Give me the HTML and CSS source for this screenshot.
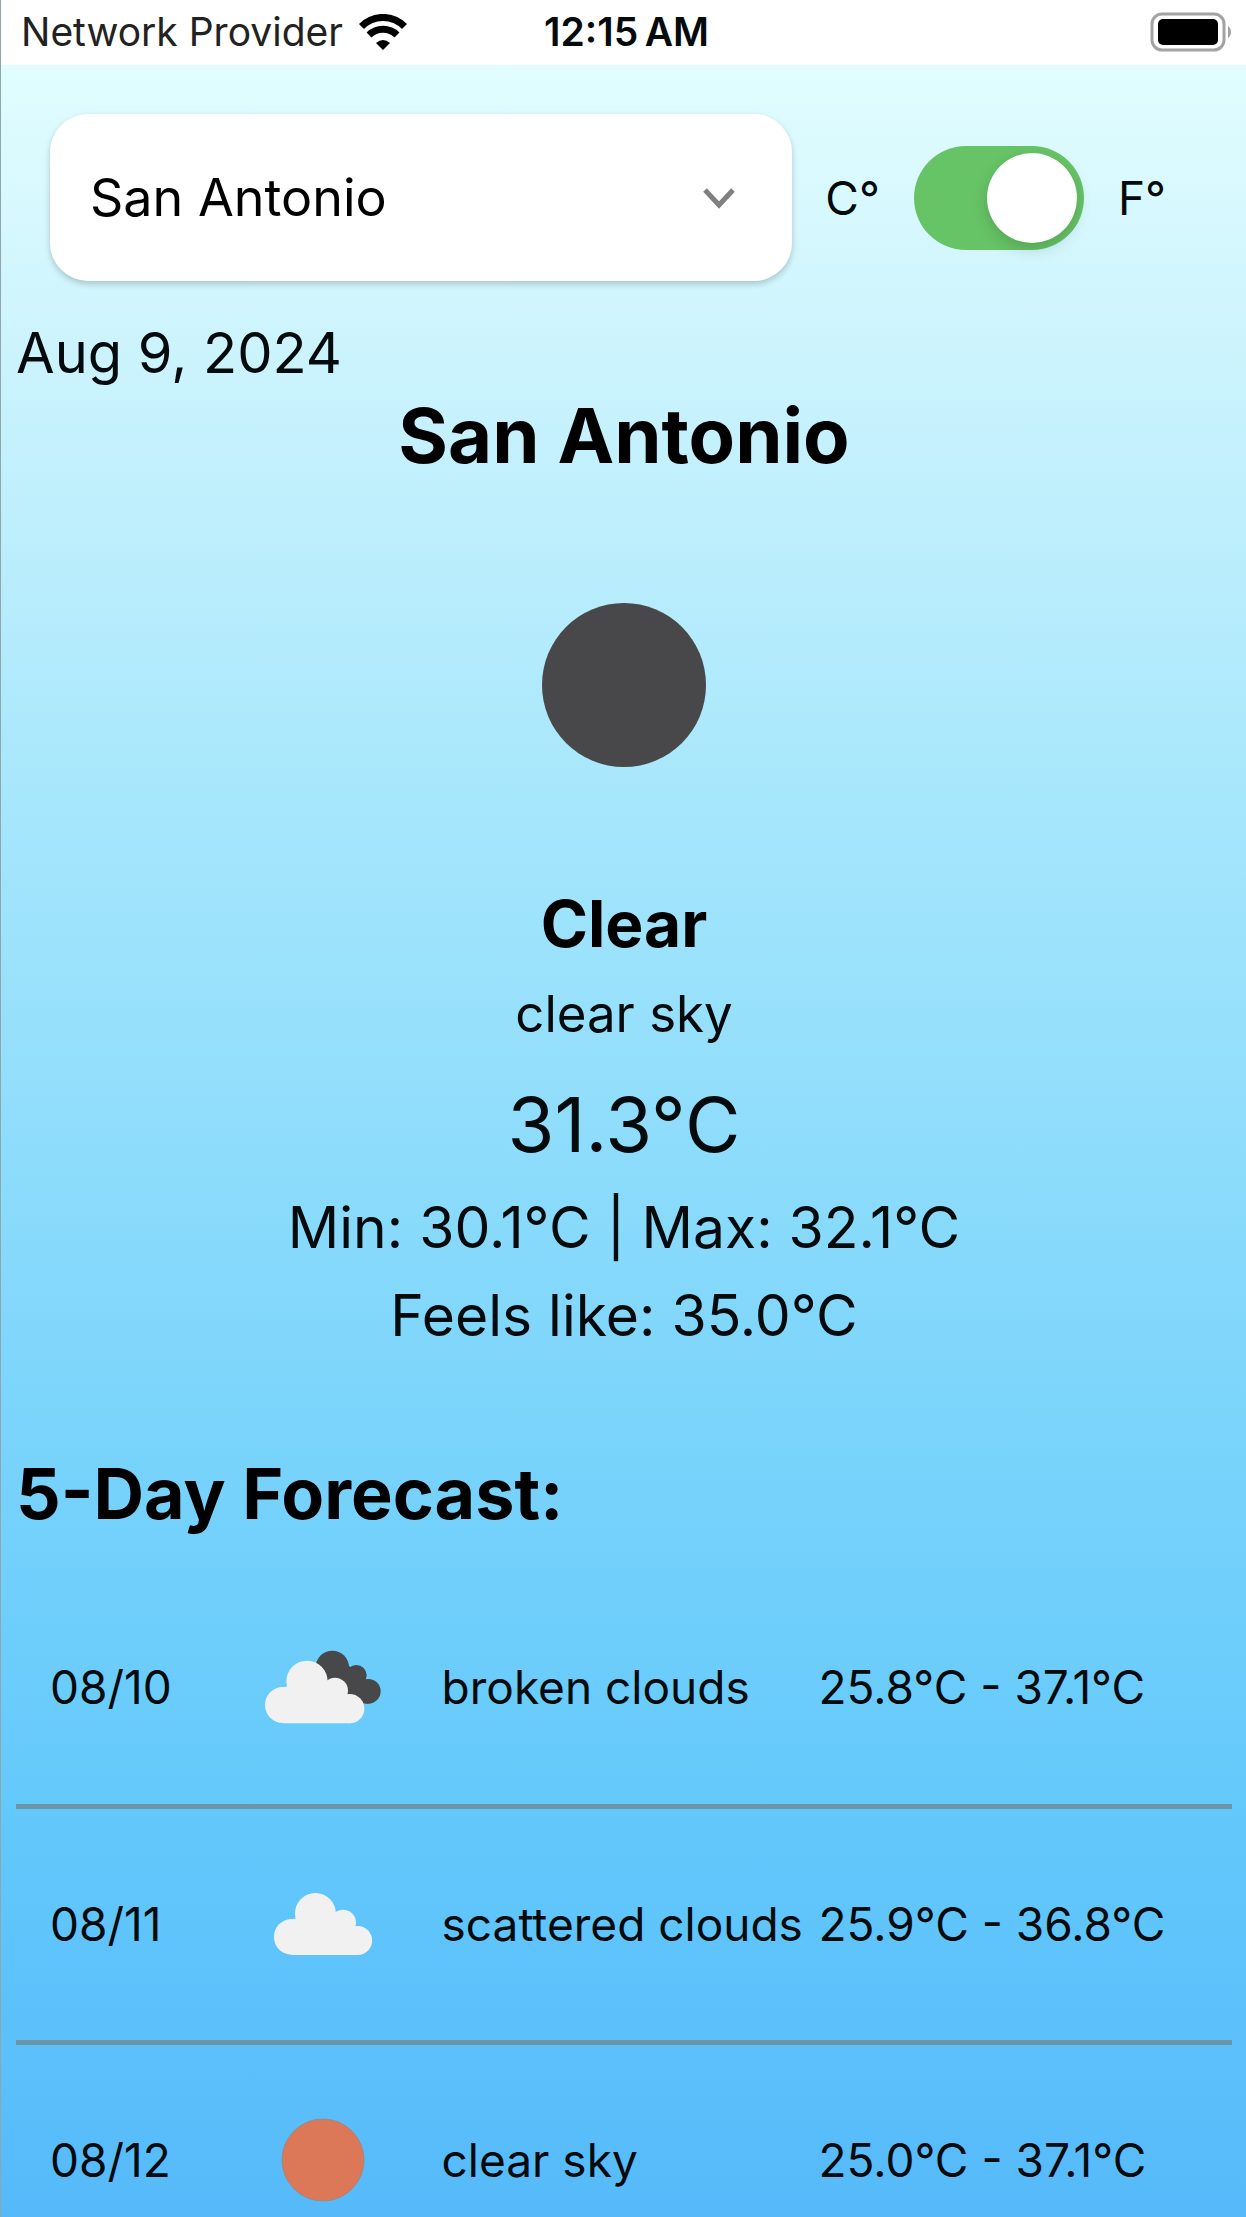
FILE: index.html
```html
<!DOCTYPE html>
<html lang="en">
<head>
  <meta charset="utf-8">
  <meta name="viewport" content="width=device-width, initial-scale=1">
  <title>Weather</title>
  <link rel="stylesheet" href="styles.css">
</head>
<body class="app">
  <header class="status-bar">
    <div class="carrier">
      <span>Network Provider</span>
      <svg class="wifi" viewBox="0 0 48 36" aria-hidden="true">
        <path d="M2.500 12.500A30 30 0 0 1 45.500 12.500" fill="none" stroke="#000" stroke-width="7"/>
        <path d="M10 21A20 20 0 0 1 38 21" fill="none" stroke="#000" stroke-width="7"/>
        <path d="M17 29Q24 23 31 29L24 36Z"/>
      </svg>
    </div>
    <span class="clock">12:15&#8201;AM</span>
    <svg class="battery" viewBox="0 0 82 40" aria-label="Battery full">
      <rect x="2" y="2" width="72" height="36" rx="10" fill="none" stroke="#a3a3a3" stroke-width="3"/>
      <rect x="8" y="7" width="60" height="26" rx="5"/>
      <path d="M78 14Q81 16 81 20T78 26Z" fill="#a3a3a3"/>
    </svg>
  </header>

  <main class="weather">
    <div class="controls">
      <div class="city-picker">
        <select class="city-select" aria-label="City">
          <option>San Antonio</option>
        </select>
        <svg class="chevron" viewBox="0 0 34 22" aria-hidden="true">
          <path d="M3 3L17 18L31 3" fill="none" stroke="#808080" stroke-width="5"/>
        </svg>
      </div>
      <div class="unit-switch">
        <label for="unit">C°</label>
        <input class="toggle" type="checkbox" role="switch" id="unit" checked>
        <label for="unit">F°</label>
      </div>
    </div>

    <section class="current">
      <p class="date">Aug 9, 2024</p>
      <h1 class="city">San Antonio</h1>
      <svg class="current-icon" viewBox="0 0 164 164" aria-hidden="true">
        <circle cx="82" cy="82" r="82" fill="#48484a"/>
      </svg>
      <h2 class="condition">Clear</h2>
      <p class="description">clear sky</p>
      <p class="temperature">31.3°C</p>
      <p class="detail">Min: 30.1°C | Max: 32.1°C</p>
      <p class="detail">Feels like: 35.0°C</p>
    </section>

    <section class="forecast">
      <h2 class="forecast-title">5-Day Forecast:</h2>
      <table class="forecast-table">
        <colgroup>
          <col class="col-date"><col class="col-icon"><col class="col-sky"><col class="col-range">
        </colgroup>
        <tbody>
          <tr>
            <td>08/10</td>
            <td class="icon-cell">
              <svg class="icon-clouds" viewBox="78 66 348 222" aria-hidden="true">
                <g fill="#48484a">
                  <circle cx="280" cy="118" r="50"/>
                  <circle cx="352" cy="142" r="31"/>
                  <circle cx="388" cy="190" r="37"/>
                  <path d="M230 118L325 110L380 150L388 227L300 220Z"/>
                </g>
                <g fill="#f1f1f1">
                  <circle cx="132" cy="231" r="54"/>
                  <circle cx="204" cy="160" r="62"/>
                  <circle cx="288" cy="188" r="39"/>
                  <circle cx="332" cy="242" r="44"/>
                  <path d="M132 180L204 150L288 180L332 240V286H132Z"/>
                </g>
              </svg>
            </td>
            <td>broken clouds</td>
            <td>25.8°C - 37.1°C</td>
          </tr>
          <tr>
            <td>08/11</td>
            <td class="icon-cell">
              <svg class="icon-cloud" viewBox="78 98 298 188" aria-hidden="true">
                <g fill="#f1f1f1">
                  <circle cx="132" cy="231" r="54"/>
                  <circle cx="204" cy="160" r="62"/>
                  <circle cx="288" cy="188" r="39"/>
                  <circle cx="332" cy="242" r="44"/>
                  <path d="M132 180L204 150L288 180L332 240V286H132Z"/>
                </g>
              </svg>
            </td>
            <td>scattered clouds</td>
            <td>25.9°C - 36.8°C</td>
          </tr>
          <tr>
            <td>08/12</td>
            <td class="icon-cell">
              <svg class="icon-sun" viewBox="0 0 84 84" aria-hidden="true">
                <circle cx="42" cy="42" r="41" fill="#dc7757" stroke="#9a8a83" stroke-width="1"/>
              </svg>
            </td>
            <td>clear sky</td>
            <td>25.0°C - 37.1°C</td>
          </tr>
        </tbody>
      </table>
    </section>
  </main>
</body>
</html>
```
FILE: styles.css
```css
* {
  box-sizing: border-box;
}

.app {
  margin: 0;
  height: 100vh;
  display: flex;
  flex-direction: column;
  overflow: hidden;
  border-left: 1px solid #8fa6ab;
  background: #fff;
  color: #050a0c;
  font-family: Inter, "Liberation Sans", sans-serif;
}

h1, h2, p {
  margin: 0;
}

h1, h2 {
  color: #000;
}

/* Status bar */
.status-bar {
  flex: none;
  display: grid;
  grid-template-columns: 1fr auto 1fr;
  align-items: center;
  height: 65px;
  padding: 0 14px 2px 20px;
  font-size: 39px;
  line-height: 44px;
}

.carrier {
  display: flex;
  align-items: center;
  gap: 16px;
  color: #222;
  white-space: nowrap;
}

.wifi {
  width: 48px;
  height: 36px;
}

.clock {
  font-weight: 600;
}

.battery {
  justify-self: end;
  width: 82px;
  height: 40px;
}

/* Screen */
.weather {
  flex: 1;
  min-height: 0;
  overflow: hidden;
  padding: 49px 14px 0 15px;
  background: linear-gradient(#e1fdff 0%, #d0f5fd 11%, #a5e6fc 35%, #7cd5fb 62%, #62c8fb 82%, #56bafa 100%);
}

.controls {
  display: flex;
  align-items: center;
  justify-content: space-between;
  padding: 0 66px 0 34px;
}

.city-picker {
  position: relative;
  flex: 0 1 742px;
}

.city-select {
  appearance: none;
  display: block;
  width: 100%;
  height: 167px;
  padding: 0 96px 0 40px;
  border: 0;
  border-radius: 38px;
  background: #fff;
  box-shadow: 0 3px 6px rgba(0, 0, 0, 0.2);
  color: #000;
  font: inherit;
  font-size: 52px;
}

.chevron {
  position: absolute;
  top: 73px;
  right: 56px;
  width: 34px;
  height: 22px;
  pointer-events: none;
}

.unit-switch {
  display: flex;
  align-items: center;
  gap: 34px;
  font-size: 46px;
  line-height: 56px;
}

.toggle {
  appearance: none;
  display: flex;
  justify-content: flex-end;
  width: 170px;
  height: 104px;
  margin: 0;
  padding: 7px;
  border-radius: 52px;
  background: #67c466;
}

.toggle::before {
  content: "";
  width: 90px;
  height: 90px;
  border-radius: 50%;
  background: #fff;
  box-shadow: 0 6px 16px rgba(0, 0, 0, 0.16);
}

.toggle:not(:checked) {
  justify-content: flex-start;
  background: #e9e9eb;
}

/* Current conditions */
.current {
  display: flex;
  flex-direction: column;
  align-items: center;
  padding-top: 34px;
}

.date {
  align-self: flex-start;
  font-size: 56px;
  line-height: 76px;
}

.city {
  font-size: 76px;
  line-height: 88px;
}

.current-icon {
  width: 164px;
  height: 164px;
  margin: 124px 0 117px;
}

.condition {
  font-size: 64px;
  line-height: 80px;
}

.description {
  font-size: 51px;
  line-height: 100px;
}

.temperature {
  font-size: 76px;
  line-height: 120px;
}

.detail {
  font-size: 57px;
  line-height: 88px;
}

/* Forecast */
.forecast-title {
  padding-top: 90px;
  font-size: 70px;
  line-height: 88px;
}

.forecast-table {
  width: 100%;
  margin-top: 32px;
  border-collapse: collapse;
  table-layout: fixed;
  font-size: 46px;
  line-height: 56px;
}

.forecast-table td {
  height: 236px;
  padding: 0;
  border-bottom: 5px solid #6d95a8;
  white-space: nowrap;
}

.forecast-table td:first-child {
  padding-left: 34px;
}

.col-date {
  width: 17%;
}

.col-icon {
  width: 18%;
}

.col-sky {
  width: 31%;
}

.col-range {
  width: 34%;
}

.icon-cell svg {
  display: block;
  margin-left: 100px;
  transform: translateX(-50%);
}

.icon-clouds {
  width: 116px;
  height: 74px;
}

.icon-cloud {
  width: 99px;
  height: 62px;
}

.icon-sun {
  width: 84px;
  height: 84px;
}
```
